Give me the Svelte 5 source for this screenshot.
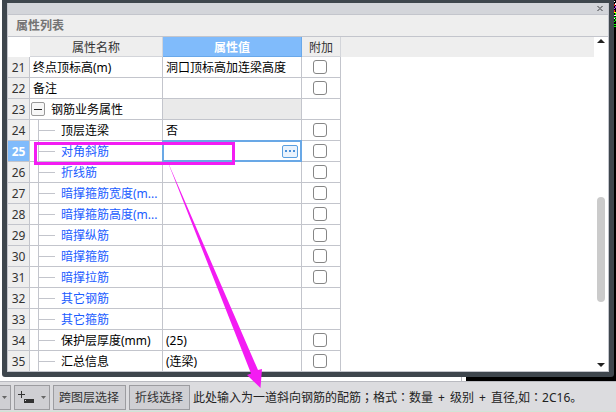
<script lang="ts">
	interface Row {
		id: number;
		name: string;
		value?: string;
		kind?: 'root' | 'group' | 'child';
		link?: boolean;
		check?: boolean;
	}

	const rows: Row[] = [
		{ id: 21, name: '终点顶标高(m)', value: '洞口顶标高加连梁高度', kind: 'root', check: true },
		{ id: 22, name: '备注', kind: 'root', check: true },
		{ id: 23, name: '钢筋业务属性', kind: 'group' },
		{ id: 24, name: '顶层连梁', value: '否', check: true },
		{ id: 25, name: '对角斜筋', link: true, check: true },
		{ id: 26, name: '折线筋', link: true, check: true },
		{ id: 27, name: '暗撑箍筋宽度(m...', link: true, check: true },
		{ id: 28, name: '暗撑箍筋高度(m...', link: true, check: true },
		{ id: 29, name: '暗撑纵筋', link: true, check: true },
		{ id: 30, name: '暗撑箍筋', link: true, check: true },
		{ id: 31, name: '暗撑拉筋', link: true, check: true },
		{ id: 32, name: '其它钢筋', link: true },
		{ id: 33, name: '其它箍筋', link: true },
		{ id: 34, name: '保护层厚度(mm)', value: '(25)', check: true },
		{ id: 35, name: '汇总信息', value: '(连梁)', check: true }
	];

	let selected = $state(25);
</script>

<div class="page">
	<div class="stage">
		<section class="dialog">
			<div class="panel">
				<div class="titlebar">
					<button class="close" aria-label="关闭">
						<svg width="6" height="5" viewBox="0 0 6 5" shape-rendering="crispEdges">
							<path d="M0 0h2v1h2v-1h2v1h-1v1h-1v1h1v1h1v1h-2v-1h-2v1h-2v-1h1v-1h1v-1h-1v-1h-1z" fill="#85878b" />
						</svg>
					</button>
				</div>
				<h1>属性列表</h1>
				<div class="body">
					<div class="content">
						<table>
							<thead>
								<tr>
									<td class="corner"></td>
									<th class="col-name">属性名称</th>
									<th class="col-value">属性值</th>
									<th class="col-check">附加</th>
								</tr>
							</thead>
							<tbody>
								{#each rows as row (row.id)}
									<tr class:selected={row.id === selected} onclick={() => (selected = row.id)}>
										<th scope="row">{row.id}</th>
										<td>
											<div class="name {row.kind ?? 'child'}" class:link={row.link}>
												{#if row.kind === 'group'}
													<button class="toggle" aria-label="折叠"></button>
												{/if}
												<span>{row.name}</span>
											</div>
										</td>
										<td class="value" class:disabled={row.kind === 'group'}>
											{#if row.id === selected}
												<button class="more" aria-label="更多"><i></i><i></i><i></i></button>
											{:else}
												{row.value ?? ''}
											{/if}
										</td>
										<td class="check">
											{#if row.check}
												<input type="checkbox" aria-label="附加 {row.name}" />
											{/if}
										</td>
									</tr>
								{/each}
							</tbody>
						</table>
					</div>
					<div class="scrollbar">
						<svg width="8" height="4" viewBox="0 0 8 4"><path d="M4 0L8 4H0z" fill="#222" /></svg>
						<div class="track"><div class="thumb"></div></div>
						<svg width="8" height="4" viewBox="0 0 8 4"><path d="M0 0H8L4 4z" fill="#222" /></svg>
					</div>
				</div>
			</div>
		</section>
	</div>

	<footer>
		<button class="tool first" aria-label="下拉">
			<svg width="5" height="3" viewBox="0 0 5 3"><path d="M0 0h5L2.500 3z" fill="#666" /></svg>
		</button>
		<button class="tool add" aria-label="添加">
			<svg width="17" height="13" viewBox="0 0 17 13" shape-rendering="crispEdges">
				<path d="M3 0h1v3h3v1H4v3H3V4H0V3h3z" fill="#333" />
				<path d="M6 8h10v4H6z" fill="#333" />
				<path d="M7 9h1v1H7z" fill="#ddd" />
			</svg>
			<svg width="5" height="3" viewBox="0 0 5 3"><path d="M0 0h5L2.500 3z" fill="#666" /></svg>
		</button>
		<button class="tool">跨图层选择</button>
		<button class="tool">折线选择</button>
		<p>
			此处输入为一道斜向钢筋的配筋<span class="mark">；</span>格式<span class="mark">：</span>数量<span class="plus">+</span>级别<span class="plus">+</span>直径,如<span class="mark">：</span>2C16。
		</p>
	</footer>

	<svg class="annotation" width="616" height="412" viewBox="0 0 616 412" aria-hidden="true">
		<rect x="35.500" y="143.500" width="198" height="20" fill="none" stroke="#f31cf3" stroke-width="3" />
		<path d="M167 160L258 370L262 369L260.500 388L247 375L251 373.500Z" fill="#f31cf3" />
	</svg>

	<svg class="canvas-noise" width="2" height="27" viewBox="0 0 2 27" shape-rendering="crispEdges" aria-hidden="true">
		<path d="M0 0h2v27h-2z" fill="#000" />
		<path d="M0 1h1v1h-1zM1 3h1v2h-1zM0 15h2v1h-2zM0 18h1v1h-1z" fill="#fff" />
		<path d="M0 4h1v2h-1zM0 10h1v2h-1z" fill="#f22" />
		<path d="M1 6h1v2h-1zM0 8h1v1h-1z" fill="#b4f" />
		<path d="M0 12h2v1h-2z" fill="#ff0" />
		<path d="M1 13h1v2h-1zM0 17h2v1h-2zM1 19h1v2h-1zM0 21h1v1h-1zM0 24h2v1h-2zM0 26h2v1h-2z" fill="#0f0" />
	</svg>
</div>

<style>
	:global(body) {
		margin: 0;
		background: #cfe5d6;
	}

	.page {
		position: relative;
		overflow: hidden;
		font: 12px/16px 'Noto Sans', 'Noto Sans CJK SC', sans-serif;
		color: #000;
	}

	button {
		box-sizing: border-box;
		padding: 0;
		font: inherit;
		color: inherit;
		border-radius: 0;
	}

	.stage {
		padding: 0 2px 4px;
		border-bottom: 1px solid #b9bac0;
		background: linear-gradient(90deg, #fff 0 461px, #b9bac0 461px 462px, #fff 462px 466px, #000 466px);
	}

	.dialog {
		padding: 3px 5px 5px;
		background: #3e464d;
		border-radius: 0 0 3px 3px;
	}

	.panel {
		border: 1px solid #c3c5cc;
		border-top: 0;
		background: #fff;
	}

	.titlebar {
		display: flex;
		justify-content: flex-end;
		align-items: center;
		height: 11px;
		padding-right: 5px;
		background: #d3d5da;
		border-bottom: 1px solid #c3c5cc;
	}

	.close {
		display: flex;
		border: 0;
		background: none;
	}

	h1 {
		margin: 0;
		padding: 0 8px;
		font-size: 12px;
		line-height: 21px;
		color: #747474;
		background: #eee;
		border-bottom: 1px solid #c3c5cc;
	}

	.body {
		display: flex;
	}

	.content {
		flex: 1;
		background: linear-gradient(#eee 20px, #fff 20px);
	}

	table {
		width: 333px;
		table-layout: fixed;
		border-collapse: separate;
		border-spacing: 0;
		background: #fff;
	}

	th,
	td {
		box-sizing: border-box;
		height: 21px;
		padding: 0;
		border-right: 1px solid #c3c5cc;
		border-bottom: 1px solid #c3c5cc;
		white-space: nowrap;
	}

	th,
	.value {
		padding-top: 2px;
	}

	thead th,
	thead td {
		height: 20px;
		font-weight: normal;
		color: #333;
		background: #eee;
		border-right-color: #d3d5da;
		border-bottom-color: #d3d5da;
	}

	tbody tr:last-child > * {
		height: 20px;
		border-bottom: 0;
	}

	thead .corner {
		width: 22px;
		background: #fff;
		border-color: #fff;
	}

	.col-name {
		width: 133px;
	}

	thead .col-value {
		width: 139px;
		font-weight: bold;
		color: #fff;
		background: #80bbfb;
		border-color: #69a8ea;
	}

	.col-check {
		width: 39px;
	}

	tbody th {
		font-weight: normal;
		color: #333;
		background: #eee;
	}

	.selected th {
		font-weight: bold;
		color: #fff;
		background: #80bbfb;
	}

	.name {
		display: flex;
		align-items: center;
		height: 20px;
		padding-left: 3px;
	}

	.name span {
		padding-top: 2px;
	}

	.name.group {
		gap: 6px;
		padding-left: 1px;
	}

	/* tree guide: a vertical rail with a branch in the middle of each row */
	.name.child {
		gap: 6px;
		padding-left: 8px;
		background: linear-gradient(#c3c5cc, #c3c5cc) 8px 0 / 1px 100% no-repeat;
	}

	.name.child::before {
		content: '';
		width: 17px;
		height: 1px;
		background: #c3c5cc;
	}

	.name.link {
		color: #1a5cff;
	}

	.toggle {
		display: flex;
		align-items: center;
		justify-content: center;
		width: 14px;
		height: 14px;
		border: 1px solid #999;
		border-radius: 2px;
		background: #f7f7f7;
	}

	.toggle::before {
		content: '';
		width: 8px;
		height: 1px;
		background: #222;
	}

	.value {
		padding-left: 3px;
	}

	.value.disabled {
		background: #eaeaea;
	}

	.selected .value {
		position: relative;
		padding-top: 0;
	}

	.selected .value::after {
		content: '';
		position: absolute;
		inset: -1px;
		border: 2px solid #69a8e6;
		pointer-events: none;
	}

	.more {
		display: flex;
		align-items: center;
		justify-content: center;
		gap: 2px;
		width: 16px;
		height: 13px;
		margin: 0 3px 0 auto;
		border: 1px solid #5a9fe0;
		border-radius: 2px;
		background: #eaf3fd;
	}

	.more i {
		width: 2px;
		height: 2px;
		background: #4a90d9;
	}

	.check input {
		appearance: none;
		display: block;
		box-sizing: border-box;
		width: 14px;
		height: 14px;
		margin: 0 0 0 11px;
		border: 1px solid #868686;
		border-radius: 3px;
		background: #fff;
	}

	.scrollbar {
		display: flex;
		flex-direction: column;
		align-items: center;
		width: 14px;
		padding: 2px 0 4px;
		background: #fff;
	}

	.track {
		flex: 1;
		padding-top: 154px;
	}

	.thumb {
		width: 8px;
		height: 105px;
		border-radius: 4px;
		background: #cbcbcb;
	}

	footer {
		display: flex;
		align-items: center;
		gap: 3px;
		padding: 3px 0 1px;
		color: #222;
		background: #dcdcdf;
		border-bottom: 1px solid #cfe5d6;
	}

	.tool {
		display: flex;
		align-items: center;
		height: 25px;
		padding: 0 6px 0 5px;
		white-space: nowrap;
		color: #333;
		border: 1px solid #9c9ca0;
		background: #cfcfd3;
	}

	.tool.first {
		padding: 0 3px 0 2px;
		border-left: 0;
	}

	.tool.add {
		gap: 6px;
		padding: 0 3px;
	}

	footer p {
		margin: 0;
		white-space: nowrap;
	}

	/* full-width marks sit in the middle of their cell */
	.mark {
		font-family: 'Noto Sans CJK TC', sans-serif;
	}

	.plus {
		padding: 0 5px;
	}

	.annotation {
		position: absolute;
		top: 0;
		left: 0;
		pointer-events: none;
	}

	.canvas-noise {
		position: absolute;
		top: 0;
		right: 0;
	}
</style>
